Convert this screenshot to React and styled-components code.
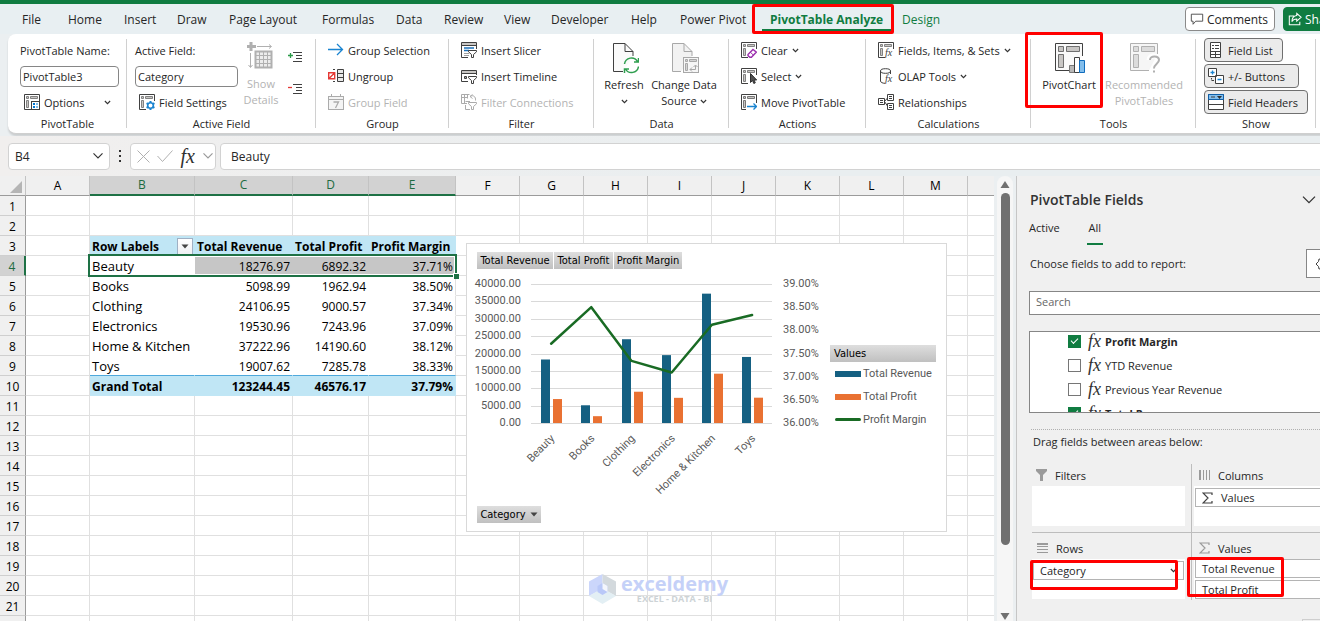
import React from "react";
import styled, { createGlobalStyle, css } from "styled-components";

const GREEN = "#107c41";
const RED = "#ff0000";
const INK = "#262626";

const GlobalStyle = createGlobalStyle`
  *, *::before, *::after { box-sizing: border-box; }
  body { margin: 0; overflow: hidden; }
  body, button, input { font-family: "Open Sans", "Noto Sans", sans-serif; font-size: 11px; color: ${INK}; }
  button { margin: 0; padding: 0; border: 0; background: none; text-align: left; }
  svg { display: block; flex: none; }
`;

/* ---------- frame ---------- */
const Viewport = styled.div`height: 100vh; overflow: hidden; background: #ebeff1;`;
const Frame = styled.div`
  width: calc(100% + 60px); height: 100%;
  display: flex; flex-direction: column;
  border-top: 4px solid ${GREEN};
`;
const Highlight = styled.span`
  position: absolute; z-index: 3; pointer-events: none;
  border: 3px solid ${RED}; border-radius: 2px;
  inset: ${(p) => p.$inset};
`;

/* ---------- tabs ---------- */
const TabBar = styled.nav`
  flex: none; display: flex; align-items: center; height: 30px;
  padding: 0 12px 0 14px; background: #e8eff2;
`;
const Tab = styled.button`
  position: relative; flex: none; height: 30px; width: ${(p) => p.$w}px;
  padding: 2px 0 0 8px; font-size: 12px; line-height: 28px; white-space: nowrap;
  color: ${(p) => (p.$green ? GREEN : INK)};
  font-weight: ${(p) => (p.$active ? 700 : 400)};
  ${(p) => p.$active && css`
    &::after { content: ""; position: absolute; left: 0; right: 2px; bottom: 3px; height: 2px; background: ${GREEN}; }
  `}
`;
const Spacer = styled.div`flex: 1;`;
const TopButton = styled.button`
  flex: none; display: flex; align-items: center; gap: 3px; height: 24px;
  margin-left: 8px; padding: 0 4px; border-radius: 4px; font-size: 12px;
  width: ${(p) => p.$w}px;
  border: 1px solid ${(p) => (p.$primary ? GREEN : "#8a8a8a")};
  background: ${(p) => (p.$primary ? GREEN : "#fff")};
  color: ${(p) => (p.$primary ? "#fff" : INK)};
`;

/* ---------- ribbon ---------- */
const Ribbon = styled.section`
  flex: none; display: flex; height: 100px; margin: 0 0 2px 8px; padding-top: 3px;
  background: #fff; border-radius: 8px 0 0 8px;
  border-bottom: 1px solid #cfcfcf;
  box-shadow: 0 2px 2px rgba(0, 0, 0, 0.14);
`;
const GroupBox = styled.div`
  position: relative; flex: none; width: ${(p) => p.$w}px;
  display: flex; flex-direction: column;
  &::after { content: ""; position: absolute; right: 0; top: 2px; height: 89px; width: 1px; background: #d0d0d0; }
`;
const GroupBody = styled.div`flex: none; height: 78px; display: flex; padding-left: ${(p) => p.$pad}px;`;
const GroupLabel = styled.div`height: 18px; line-height: 18px; text-align: center;`;
const Rows = styled.div`flex: none; width: ${(p) => (p.$w ? p.$w + "px" : "auto")}; display: grid; grid-template-rows: repeat(3, 26px); align-items: center;`;
const Command = styled.button`
  display: flex; align-items: center; gap: 4px; height: 24px; white-space: nowrap;
  padding: 0 ${(p) => (p.$indent ? 8 : 0)}px 0 ${(p) => (p.$indent ? 4 : 0)}px;
  color: ${(p) => (p.disabled ? "#b3b3b3" : INK)};
`;
const Toggle = styled(Command)`
  justify-self: start; width: ${(p) => p.$w}px; padding: 0 0 0 3px;
  border: 1px solid #707070; border-radius: 4px; background: #ebebeb;
`;
const FieldLabel = styled.label`white-space: nowrap;`;
const RibbonInput = styled.input`
  width: ${(p) => p.$w}px; height: 21px; padding: 0 2px; border: 1px solid #868686; border-radius: 4px; background: #fff;
`;
const Big = styled.button`
  position: relative; flex: none; width: ${(p) => p.$w}px; height: 76px; padding-top: 5px;
  display: flex; flex-direction: column; align-items: center; text-align: center; line-height: 16px;
  color: ${(p) => (p.disabled ? "#b3b3b3" : INK)};
  white-space: nowrap;
  & > svg:first-child { margin-bottom: 3px; }
`;
const Inline = styled.span`display: flex; align-items: center; gap: 3px; height: 16px;`;
const IconStack = styled.div`display: grid; gap: 6px; align-content: start; padding-top: 7px; margin-left: 4px;`;
const IconButton = styled.button`display: grid; place-items: center; height: 26px;`;

/* ---------- formula bar ---------- */
const FormulaBar = styled.section`
  flex: none; display: flex; align-items: center; height: 40px; padding: 0 0 0 8px;
  background: linear-gradient(90deg, #f1efee, #e9eef0 60%);
`;
const FormulaBox = styled.div`
  flex: ${(p) => (p.$w ? "none" : 1)}; width: ${(p) => p.$w}px; height: 27px; margin-left: ${(p) => p.$ml || 0}px;
  display: flex; align-items: center; justify-content: space-between; padding: 0 ${(p) => (p.$tight ? 1 : 5)}px 0 6px;
  border: 1px solid #d2d2d2; border-radius: 4px; background: #fff;
`;
const PlainInput = styled.input`min-width: 0; flex: 1; border: 0; padding: 0; background: none; font-size: 12px; outline: 0; padding-left: ${(p) => p.$pl || 0}px;`;
const Fx = styled.span`font: italic 400 ${(p) => p.$size}px/1 "Liberation Serif", serif; color: #303030;`;

/* ---------- sheet ---------- */
const Workspace = styled.div`flex: 1; min-height: 0; display: flex;`;
const Sheet = styled.main`position: relative; flex: 1; min-width: 0; overflow: hidden; background: #fff;`;
const Grid = styled.table`
  table-layout: fixed; width: 1032px; border-collapse: separate; border-spacing: 0;
  font-size: 13px; color: #000;
`;
const ColHead = styled.th`
  height: 20px; padding: 0; font-weight: 400; font-size: 12px; line-height: 18px;
  background: ${(p) => (p.$on ? "#d2d2d2" : "#f0f0f0")};
  color: ${(p) => (p.$on ? "#1e6b41" : "#000")};
  border-right: 1px solid #c3c3c3;
  border-bottom: ${(p) => (p.$on ? "2px solid #1e7145" : "1px solid #9b9b9b")};
`;
const RowHead = styled.th`
  height: 20px; padding: 2px 0 0; font-weight: 400; font-size: 12px; line-height: 17px;
  background: ${(p) => (p.$on ? "#d2d2d2" : "#f0f0f0")};
  color: ${(p) => (p.$on ? "#1e6b41" : "#000")};
  border-right: ${(p) => (p.$on ? "2px solid #1e7145" : "1px solid #9b9b9b")};
  border-bottom: 1px solid #cfcfcf;
`;
const Cell = styled.td`
  position: relative; height: 20px; padding: 2px 2px 0; line-height: 17px; white-space: nowrap;
  border-right: 1px solid #e0e0e0; border-bottom: 1px solid #e0e0e0;
  ${(p) => p.$pivot && css`border-color: transparent;`}
  ${(p) => p.$edge && css`border-right-color: #e0e0e0;`}
  ${(p) => p.$num && css`text-align: right; font-size: 12px; padding-right: 2px;`}
  ${(p) => p.$bold && css`font-weight: 700; font-size: 12px; background: #c0e6f5; border-color: #c0e6f5;`}
  ${(p) => p.$grey && css`background: #c6c6c6; border-color: #c6c6c6;`}
  ${(p) => p.$rule && css`border-bottom-color: #4fa9dc;`}
`;
const HeadCell = styled.div`display: flex; align-items: center; justify-content: space-between; height: 17px; margin-right: -1px;`;
const FilterButton = styled.button`
  display: grid; place-items: center; width: 16px; height: 17px;
  border: 1px solid #9fb0c4; background: linear-gradient(#fff, #eef0f3);
`;
const Selection = styled.div`
  position: absolute; z-index: 1; left: -2px; top: -2px; width: 369px; height: 23px;
  border: 2px solid #1e7145; box-shadow: inset 0 0 0 1px #fff;
  &::after { content: ""; position: absolute; right: -4px; bottom: -4px; width: 6px; height: 6px; background: #1e7145; border: solid #fff; border-width: 1px 0 0 1px; }
`;

/* ---------- chart ---------- */
const ChartPanel = styled.figure`
  position: absolute; z-index: 2; left: 466px; top: 67px; width: 481px; height: 289px; margin: 0;
  padding: 8px 10px; border: 1px solid #d9d9d9; background: #fff;
  display: flex; flex-direction: column; align-items: flex-start;
`;
const ChartButtons = styled.div`display: flex; gap: 1px;`;
const ChartButton = styled.button`
  display: flex; align-items: center; justify-content: center; gap: 4px; height: 17px; width: ${(p) => p.$w}px;
  background: linear-gradient(#dedede, #c0c0c0); color: #000; white-space: nowrap; line-height: 15px;
  font-family: "DejaVu Sans Condensed", "DejaVu Sans", sans-serif;
`;
const ChartBody = styled.div`flex: 1; display: flex; margin-left: -10px;`;
const Legend = styled.ul`
  list-style: none; margin: 76px 0 0 5px; padding: 0; width: 106px; color: #595959; font-family: Roboto, sans-serif;
`;
const LegendTitle = styled.li`
  height: 17px; line-height: 17px; padding-left: 4px; color: #000; background: linear-gradient(#dedede, #c0c0c0);
  font-family: "DejaVu Sans Condensed", "DejaVu Sans", sans-serif;
`;
const LegendItem = styled.li`display: flex; align-items: center; gap: 2px; height: 23px; padding-left: 5px; white-space: nowrap;`;
const Swatch = styled.span`flex: none; width: 26px; height: ${(p) => p.$h}px; background: ${(p) => p.$c}; border-radius: ${(p) => (p.$h < 6 ? 2 : 0)}px;`;

/* ---------- watermark ---------- */
const Watermark = styled.div`position: absolute; left: 588px; top: 397px; display: flex; align-items: center; gap: 4px;`;
const Brand = styled.div`font-size: 20px; font-weight: 700; line-height: 20px; color: #c5d1f8;`;
const Tagline = styled.div`font-size: 9px; font-weight: 700; line-height: 10px; color: #cdd3d6; text-align: center;`;

/* ---------- scroll bar ---------- */
const ScrollBar = styled.div`
  flex: none; width: 16px; margin: 0 3px; padding: 5px 0 0; border-radius: 8px 8px 0 0; background: #f6f6f6;
  display: flex; flex-direction: column; align-items: center;
`;
const Thumb = styled.div`flex: none; width: 9px; height: 80%; margin-top: 4px; border-radius: 5px; background: #707070;`;

/* ---------- pane ---------- */
const Pane = styled.aside`
  flex: none; width: 364px; border-left: 1px solid #c6c6c6; background: #f0f0f0; overflow: hidden;
  display: flex; flex-direction: column;
  & > * { flex: none; }
`;
const PaneTop = styled.div`padding-left: 12px;`;
const PaneTitleRow = styled.div`display: flex; align-items: center; height: 32px; margin-top: 8px; padding-right: 24px; gap: 27px;`;
const PaneTitle = styled.h2`flex: 1; margin: 0; padding-left: 1px; font-size: 14px; font-weight: 600; line-height: 20px; color: #333;`;
const PaneTabs = styled.div`display: flex; gap: 27px; height: 29px;`;
const PaneTab = styled.button`
  height: 29px; padding: 0 ${(p) => (p.$on ? 2 : 0)}px 5px; border-bottom: 2px solid ${(p) => (p.$on ? GREEN : "transparent")};
`;
const ChooseRow = styled.div`display: flex; align-items: center; justify-content: space-between; height: 29px; margin-top: 4px; padding: 0 26px 0 1px;`;
const GearButton = styled.button`display: flex; align-items: center; gap: 4px; width: 48px; height: 29px; padding-left: 8px; border: 1px solid #868686; background: #fff;`;
const SearchBox = styled.input`
  display: block; width: 320px; height: 24px; margin-top: 13px; padding: 0 6px 4px; border: 1px solid #868686; background: #fff;
  &::placeholder { color: #666; opacity: 1; }
`;
const FieldList = styled.ul`
  list-style: none; width: 320px; height: 82px; margin: 16px 0 0; padding: 0; overflow: hidden; border: 1px solid #868686; background: #fff;
`;
const FieldRow = styled.li`height: 24px; margin-top: ${(p) => (p.$first ? -3 : 0)}px;`;
const FieldName = styled.label`display: flex; align-items: center; height: 24px; padding-left: 38px; font-weight: ${(p) => (p.$bold ? 700 : 400)};`;
const FieldFx = styled(Fx)`width: 17px; margin-left: 7px;`;
const Check = styled.input`
  appearance: none; flex: none; position: relative; width: 13px; height: 13px; margin: 0;
  border: 1px solid #767676; background: #fff;
  &:checked { background: ${GREEN}; border-color: ${GREEN}; }
  &:checked::after {
    content: ""; position: absolute; left: 2px; top: 2px; width: 7px; height: 4px;
    border: solid #fff; border-width: 0 0 1px 1px; transform: rotate(-45deg);
  }
`;
const DragTitle = styled.div`margin: 16px 24px 0 14px; padding: 4px 0 0 2px; height: 35px; line-height: 16px; border-top: 1px dotted #b0b0b0;`;
const Zones = styled.div`display: grid; grid-template-columns: 160px 1fr; margin: 0 24px 0 15px;`;
const Zone = styled.section`
  height: ${(p) => (p.$bottom ? 67 : 69)}px;
  padding: ${(p) => (p.$bottom ? 4 : 0)}px ${(p) => (p.$right ? 0 : 6)}px 0 ${(p) => (p.$right ? 2 : 0)}px;
  ${(p) => !p.$bottom && css`border-bottom: 1px solid #bdbdbd;`}
  ${(p) => !p.$right && css`border-right: 1px solid #bdbdbd;`}
`;
const ZoneTitle = styled.h3`display: flex; align-items: center; gap: 8px; height: 22px; margin: 0; padding-left: ${(p) => p.$pl}px; font-size: 11px; font-weight: 400;`;
const ZoneBox = styled.div`position: relative; height: 40px; padding: ${(p) => p.$pt || 0}px 1px 0; background: #fff; display: grid; gap: 2px; align-content: start;`;
const ZoneItem = styled.button`
  display: flex; align-items: center; gap: 8px; height: 19px; padding: 0 6px; border: 1px solid #b4b4b4; background: #fff;
`;
const PaneFooter = styled.footer`display: flex; justify-content: flex-end; margin-top: 19px; padding-right: 18px;`;
const UpdateButton = styled.button`width: 60px; height: 24px; border: 1px solid #cfcfcf; text-align: center; color: #a0a0a0;`;

/* ---------- icons ---------- */
const Chevron = ({ s = 7, c = "#333", w = 1 }) => (
  <svg width={s} height={s} viewBox="0 0 8 8" fill="none" stroke={c} strokeWidth={w * 1.3}><path d="M1 2.3 4 5.3 7 2.3" /></svg>
);
const Svg16 = ({ children, c = "#404040", s = 16 }) => (
  <svg width={s} height={s} viewBox="0 0 16 16" fill="none" stroke={c} strokeWidth="1">{children}</svg>
);
const PivotBase = () => (
  <>
    <path d="M15.5 7V.5H.5v15H7" />
    <path d="M2.5 2.5h2v2h-2zM6.5 2.5h7v2h-7zM2.5 6.5h2v7h-2z" fill="#c8c6c4" strokeWidth=".9" stroke="#777" />
  </>
);
const OptionsIcon = () => (
  <Svg16><PivotBase /><rect x="7.5" y="7.5" width="8" height="8" fill="#fff" /><path d="M9 10h2M9 13h2" stroke="#0078d4" strokeWidth="2" /><path d="M12 10h2M12 13h2" stroke="#0078d4" /></Svg16>
);
const SettingsIcon = () => (
  <Svg16><PivotBase /><circle cx="11.5" cy="11.5" r="5" fill="#fff" stroke="none" /><g stroke="#1a84d0"><circle cx="11.5" cy="11.5" r="2.8" strokeWidth="1.6" /><path strokeWidth="2" d="M11.5 7v1.4M11.5 14.6V16M7.6 9.2l1.2.8M14.2 13l1.2.8M15.4 9.2l-1.2.8M8.8 13l-1.2.8" /></g></Svg16>
);
const ClearIcon = () => (
  <Svg16><PivotBase /><path d="m7 12.5 5-5 3.4 2.6-5 5.2H8.8L7 13.6z" fill="#fff" stroke="#9b2fae" strokeWidth="1.4" /><path d="m9.3 10.2 3.2 3" stroke="#9b2fae" /></Svg16>
);
const SelectIcon = () => (
  <Svg16><PivotBase /><path d="M9.5 5.5v9l2-2 1.3 3 1.5-.7-1.3-2.8h2.7z" fill="#505050" stroke="#303030" /></Svg16>
);
const MoveIcon = () => (
  <Svg16><path d="M15.5 9V.5H.5v15H5" /><path d="M2.5 2.5h2v2h-2zM6.5 2.5h7v2h-7zM2.5 6.5h2v7h-2z" fill="#c8c6c4" stroke="#777" /><path d="M6 12.5h9.5M12.5 9.5l3 3-3 3" stroke="#1a84d0" strokeWidth="1.3" /></Svg16>
);
const FieldsIcon = () => (
  <Svg16><PivotBase /><text x="7" y="14" fontSize="10" fontStyle="italic" fontFamily="Liberation Serif, serif" fill="#404040" stroke="none">fx</text></Svg16>
);
const OlapIcon = () => (
  <Svg16><ellipse cx="7.5" cy="3" rx="5" ry="2.3" /><path d="M2.5 3v10c0 1.3 2 2.3 4.5 2.3M12.5 3v3" /><text x="7" y="14" fontSize="10" fontStyle="italic" fontFamily="Liberation Serif, serif" fill="#404040" stroke="none">fx</text></Svg16>
);
const RelationsIcon = () => (
  <Svg16><path d="M.5 4.5h6v6h-6zM9.5.5h6v6h-6zM9.5 9.5h6v6h-6z" fill="#fff" /><path d="M2 6.5h3M2 8.5h3M11 2.5h3M11 4.5h3M11 11.5h3M11 13.5h3M6.5 7.5 9.5 4M6.5 7.5l3 4.5" /></Svg16>
);
const ArrowIcon = () => <Svg16 c="#1a84d0"><path d="M0 7.5h14.5M9 2l5.5 5.5L9 13" strokeWidth="1.3" /></Svg16>;
const UngroupIcon = () => (
  <Svg16><path d="M9.5 1.5h6v12h-6zM9.5 5.5h6M9.5 9.5h6" fill="#e9e9e9" /><path d="M5 1.5h3M5 13.5h3" strokeDasharray="2 1" /><path d="M.7 4.7h6v6h-6zM1 10.5 6.5 5" stroke="#e53935" strokeWidth="1.4" /></Svg16>
);
const CalendarIcon = () => (
  <Svg16 c="#ababab"><rect x=".5" y="2.5" width="15" height="13" fill="#f4f4f4" /><path d="M.5 5.5h15M3.5 0v2.5M12.5 0v2.5" /><path d="M5.5 8h5l-3 6" strokeWidth="1.3" /></Svg16>
);
const Funnel = ({ c = "#404040" }) => <path d="M7.5 8.5h8v1.3l-3 2.7v3h-2v-3l-3-2.7z" fill="#fff" stroke={c} />;
const SlicerIcon = () => (
  <Svg16><path d="M7 15.5H.5V.5h15V7M.5 3.5h15" /><path d="M1 1h14v2H1z" fill="#c8c6c4" stroke="none" /><path d="M3 6h10M3 8.5h5" stroke="#1a6fb8" strokeWidth="1.6" /><path d="M3 11.5h5M3 13.5h5" stroke="#a0a0a0" /><Funnel /></Svg16>
);
const TimelineIcon = () => (
  <Svg16><path d="M7 13.5H.5v-11h15V7M.5 5.5h15" /><path d="M1 3h14v2H1z" fill="#c8c6c4" stroke="none" /><path d="M3.5 8.5h2v2h-2z" fill="#aaa" /><Funnel /></Svg16>
);
const ConnectionsIcon = () => (
  <Svg16 c="#ababab"><path d="M6 9.5H.5v-9h8M.5 3.5H7M3.5.5v9M6.5.5v4M9 2.5c3-2 6 0 5.5 4M9 2.5l2.5-2M9 2.5l2.5 2" /><path d="M4.5 11v4.5H9M4.5 7.5H9" /><Funnel c="#ababab" /></Svg16>
);
const ShowDetailsIcon = () => (
  <svg width="28" height="31" viewBox="1 0 28 31" fill="none" stroke="#b0b0b0"><path d="M5 0v9M1 4.5h9" strokeWidth="3" /><path d="M11 4.5h14M23 2.5l2.5 2-2.5 2M4.5 11v14M2.5 23l2 2.5 2-2.5" /><rect x="9.5" y="9.5" width="16" height="16" fill="#ececec" strokeWidth="2" /><path d="M9.5 13.5h16M9.5 17.5h16M9.5 21.5h16M13.5 9.5v16M17.5 9.5v16M21.5 9.5v16" /></svg>
);
const ExpandIcon = ({ minus }) => (
  <svg width="16" height="14" viewBox="0 0 16 14" fill="none" stroke="#404040"><path d="M6 2.5h9M9 5.5h6M9 8.5h6M6 11.5h9" /><path d={minus ? "M1 5.5h4" : "M1 5.5h5M3.5 3v5"} stroke={minus ? "#e53935" : "#2a9a48"} strokeWidth="1.3" /></svg>
);
const RefreshIcon = () => (
  <svg width="30" height="32" viewBox="-1 0 30 32" fill="none" stroke="#404040"><path d="M13 29.5H3.5v-28H15l8 8V14" fill="#fafafa" /><path d="M15 1.5v8h8" /><g stroke="#2f9e4f" strokeWidth="1.5"><path d="M14.5 22a7 7 0 0 1 13-2.5M28.5 24.5a7 7 0 0 1-13 2.5M28.5 16v4H24M14.5 31v-4H19" /></g></svg>
);
const ChangeIcon = () => (
  <svg width="30" height="32" viewBox="-1 0 30 32" fill="none" stroke="#a8a8a8"><path d="M11 29.5H2.5v-28H14l8 8V14" fill="#f2f2f2" /><path d="M14 1.5v8h8" /><rect x="13.5" y="15.5" width="15" height="15" fill="#f6f6f6" /><path d="M15.5 17.5h2v2h-2zM19.5 17.5h7v2h-7zM15.5 21.5h2v7h-2z" fill="#d4d4d4" /><path d="M20 27.5h5.5v-4M22 25.5l-2 2 2 2M23.5 25l2-2 2 2" /></svg>
);
const PivotChartIcon = () => (
  <svg width="32" height="32" viewBox="0 0 32 32" fill="none" stroke="#404040"><path d="M29.5 14V1.5h-27v27H16" fill="#fafafa" /><path d="M5.5 4.5h5v5h-5zM13.5 4.5h13v5h-13zM5.5 12.5h5v13h-5z" fill="#c8c6c4" stroke="#6f6f6f" /><path d="M16.5 23.5h5v7h-5z" fill="#b8b8b8" stroke="#777" /><path d="M21.5 15.5h5v15h-5z" fill="#fff" /><path d="M26.5 18.5h5v12h-5z" fill="#83beec" stroke="#0f6cbd" /></svg>
);
const RecommendedIcon = () => (
  <svg width="32" height="32" viewBox="0 0 32 32" fill="none" stroke="#b0b0b0"><path d="M29.5 12V1.5h-27v27H21" fill="#f6f6f6" /><path d="M5.5 4.5h5v5h-5zM13.5 4.5h13v5h-13zM5.5 12.5h5v13h-5z" fill="#dcdcdc" /><path d="M21 18c0-6 10-5.5 10 0 0 4-5 4-5 8.5M26 28v2.5" stroke="#fff" strokeWidth="5" /><path d="M22 18c0-5 9-4.5 9 0 0 3.5-5 4-5 8.5M26 28.5v2" strokeWidth="2" /></svg>
);
const FieldListIcon = () => (
  <Svg16><path d="M2.5.5h10v15h-10zM2.5 9.5h10M2.5 12.5h10M7.5 9.5v6" fill="#fff" /><path d="M4 3.5h2M7 3.5h4M4 6.5h2M7 6.5h4" /></Svg16>
);
const PlusMinusIcon = () => (
  <Svg16><path d="M.5.5h8v8h-8zM7.5 7.5h8v8h-8z" fill="#fff" /><path d="M3.5 11.5V10M3.5 12.5H6" /><path d="M2.5 4.5h4M4.5 2.5v4M9.5 11.5h4" stroke="#1a84d0" strokeWidth="1.3" /></Svg16>
);
const HeadersIcon = () => (
  <Svg16><path d="M.5.5h15v15H.5z" fill="#fff" /><path d="M.5.5h15v5H.5z" fill="#83beec" stroke="#0f5fa8" /><path d="M.5 10.5h15M3 3h4" /><path d="M9 2h5l-2.5 3z" fill="#303030" stroke="none" /></Svg16>
);
const CommentIcon = () => <Svg16 s={14}><path d="M1.5 2.5h13v8h-8l-3 3.5v-3.5h-2z" /></Svg16>;
const ShareIcon = () => <Svg16 c="#fff" s={14}><path d="M7 4.5H1.5v10h12V11M10 1.5l5 4.5-5 4.5V8C7 8 5.5 9 4.5 11 4.5 7 7 4.5 10 4z" strokeWidth="1.2" /></Svg16>;
const GearIcon = () => (
  <Svg16><path d="M8 1.5 9.5 3.5 12 3l.5 2.5L15 8l-2.5 2.5L12 13l-2.5-.5L8 14.5 6.5 12.5 4 13l-.5-2.5L1 8l2.5-2.5L4 3l2.5.5z" /><circle cx="8" cy="8" r="2" /></Svg16>
);
const ScrollArrow = ({ down }) => <svg width="10" height="8" viewBox="0 0 10 8" fill="#707070"><path d={down ? "M.5 0h9L5 7z" : "M.5 7h9L5 0z"} /></svg>;
const Caret = () => <svg width="8" height="5" viewBox="0 0 8 5" fill="#444"><path d="M.5.5h7L4 4.5z" /></svg>;
const Sigma = ({ c = "#404040" }) => <svg width="11" height="12" viewBox="0 0 11 12" fill="none" stroke={c} strokeWidth="1.2"><path d="M10 3V1H1l5 5-5 5h9V9" /></svg>;
const FilterGlyph = () => <svg width="11" height="12" viewBox="0 0 11 12" fill="#9a9a9a"><path d="M0 0h11v2L7 6v6H4V6L0 2z" /></svg>;
const BarsGlyph = ({ rows }) => (
  <svg width="11" height="10" viewBox="0 0 11 10" stroke="#9a9a9a">
    {rows ? <path d="M0 1h11" strokeWidth="2" /> : <path d="M1 0v10" strokeWidth="2" />}
    <path d={rows ? "M0 3.5h11M0 6.5h11M0 9.5h11" : "M4.5 0v10M7.5 0v10M10.5 0v10"} />
  </svg>
);

/* ---------- data ---------- */
const tabs = [
  ["File", 46], ["Home", 56], ["Insert", 53], ["Draw", 52], ["Page Layout", 93], ["Formulas", 74], ["Data", 48],
  ["Review", 60], ["View", 47], ["Developer", 80], ["Help", 49], ["Power Pivot", 90], ["PivotTable Analyze", 132], ["Design", 60],
];
const columns = [["A", 64], ["B", 105], ["C", 98], ["D", 76], ["E", 87], ...[..."FGHIJKLM"].map((l) => [l, 64]), ["", 64]];
const sheetRows = {
  3: ["Row Labels", "Total Revenue", "Total Profit", "Profit Margin"],
  4: ["Beauty", "18276.97", "6892.32", "37.71%"],
  5: ["Books", "5098.99", "1962.94", "38.50%"],
  6: ["Clothing", "24106.95", "9000.57", "37.34%"],
  7: ["Electronics", "19530.96", "7243.96", "37.09%"],
  8: ["Home & Kitchen", "37222.96", "14190.60", "38.12%"],
  9: ["Toys", "19007.62", "7285.78", "38.33%"],
  10: ["Grand Total", "123244.45", "46576.17", "37.79%"],
};
const series = [4, 5, 6, 7, 8, 9].map((r) => ({
  name: sheetRows[r][0], revenue: +sheetRows[r][1], profit: +sheetRows[r][2], margin: parseFloat(sheetRows[r][3]),
}));
const fields = [["Profit Margin", true], ["YTD Revenue", false], ["Previous Year Revenue", false], ["Total Revenue", true]];

/* ---------- parts ---------- */
function Group({ w, pad = 12, label, children }) {
  return <GroupBox $w={w}><GroupBody $pad={pad}>{children}</GroupBody><GroupLabel>{label}</GroupLabel></GroupBox>;
}

function SheetCell({ row, col }) {
  const data = sheetRows[row];
  if (!data || col < 1 || col > 4) return <Cell />;
  const text = data[col - 1];
  const bold = row === 3 || row === 10;
  return (
    <Cell $pivot $edge={col === 4} $bold={bold} $num={col > 1 && row !== 3} $grey={row === 4 && col > 1} $rule={row === 9}>
      {row === 3 && col === 1 ? (
        <HeadCell>{text}<FilterButton aria-label="Filter row labels"><Caret /></FilterButton></HeadCell>
      ) : text}
      {row === 4 && col === 1 && <Selection />}
    </Cell>
  );
}

function Plot() {
  const x0 = 64, step = 40.2, top = 14, bottom = 153, h = bottom - top;
  const yRev = (v) => bottom - (v / 40000) * h;
  const yPct = (v) => bottom - ((v - 36) / 3) * h;
  const cx = (i) => x0 + step * (i + 0.5);
  const ticks = [0, 1, 2, 3, 4, 5, 6, 7, 8];
  return (
    <svg width="358" height="236" viewBox="0 -1 358 236" fontSize="11" fontFamily="Roboto, sans-serif" fill="#595959" role="img" aria-label="Revenue, profit and margin by category">
      {ticks.map((t) => (
        <g key={t}>
          <path d={`M${x0} ${Math.round(yRev(t * 5000)) + 0.5}h241`} stroke="#d9d9d9" />
          <text x="54" y={yRev(t * 5000) + 3} textAnchor="end">{(t * 5000).toFixed(2)}</text>
        </g>
      ))}
      {[36, 36.5, 37, 37.5, 38, 38.5, 39].map((p) => (
        <text key={p} x="316" y={yPct(p) + 3}>{p.toFixed(2)}%</text>
      ))}
      {series.map((s, i) => (
        <g key={s.name}>
          <rect x={Math.round(cx(i) - 10)} width="9" y={yRev(s.revenue)} height={bottom - yRev(s.revenue)} fill="#156082" />
          <rect x={Math.round(cx(i) + 2)} width="9" y={yRev(s.profit)} height={bottom - yRev(s.profit)} fill="#e97132" />
          <text transform={`translate(${cx(i) + 4} 169) rotate(-45)`} textAnchor="end">{s.name}</text>
        </g>
      ))}
      <polyline points={series.map((s, i) => `${cx(i)},${yPct(s.margin)}`).join(" ")} fill="none" stroke="#196b24" strokeWidth="2.5" strokeLinecap="round" strokeLinejoin="round" />
    </svg>
  );
}

function Chart() {
  return (
    <ChartPanel>
      <ChartButtons>
        <ChartButton $w={76}>Total Revenue</ChartButton>
        <ChartButton $w={59}>Total Profit</ChartButton>
        <ChartButton $w={68}>Profit Margin</ChartButton>
      </ChartButtons>
      <ChartBody>
        <Plot />
        <Legend>
          <LegendTitle>Values</LegendTitle>
          <LegendItem><Swatch $c="#156082" $h={6} />Total Revenue</LegendItem>
          <LegendItem><Swatch $c="#e97132" $h={6} />Total Profit</LegendItem>
          <LegendItem><Swatch $c="#196b24" $h={3} />Profit Margin</LegendItem>
        </Legend>
      </ChartBody>
      <ChartButton $w={64}>Category <Caret /></ChartButton>
    </ChartPanel>
  );
}

export default function App() {
  return (
    <Viewport>
      <GlobalStyle />
      <Frame>
        <TabBar>
          {tabs.map(([name, w]) => {
            const active = name === "PivotTable Analyze";
            return (
              <Tab key={name} $w={w} $active={active} $green={active || name === "Design"}>
                {name}
                {active && <Highlight $inset="0 0 0 -10px" />}
              </Tab>
            );
          })}
          <Spacer />
          <TopButton $w={90}><CommentIcon />Comments</TopButton>
          <TopButton $w={85} $primary><ShareIcon />Share</TopButton>
        </TabBar>

        <Ribbon>
          <Group w={119} label="PivotTable">
            <Rows $w={99}>
              <FieldLabel htmlFor="pt-name">PivotTable Name:</FieldLabel>
              <RibbonInput id="pt-name" $w={99} defaultValue="PivotTable3" />
              <Command $indent><OptionsIcon />Options<Spacer /><Chevron /></Command>
            </Rows>
          </Group>
          <Group w={189} pad={8} label="Active Field">
            <Rows $w={104}>
              <FieldLabel htmlFor="active-field">Active Field:</FieldLabel>
              <RibbonInput id="active-field" $w={103} defaultValue="Category" />
              <Command $indent><SettingsIcon />Field Settings</Command>
            </Rows>
            <Big $w={44} disabled><ShowDetailsIcon /><span>Show</span><span>Details</span></Big>
            <IconStack>
              <IconButton aria-label="Expand field"><ExpandIcon /></IconButton>
              <IconButton aria-label="Collapse field"><ExpandIcon minus /></IconButton>
            </IconStack>
          </Group>
          <Group w={133} label="Group">
            <Rows>
              <Command><ArrowIcon />Group Selection</Command>
              <Command><UngroupIcon />Ungroup</Command>
              <Command disabled><CalendarIcon />Group Field</Command>
            </Rows>
          </Group>
          <Group w={145} label="Filter">
            <Rows>
              <Command><SlicerIcon />Insert Slicer</Command>
              <Command><TimelineIcon />Insert Timeline</Command>
              <Command disabled><ConnectionsIcon />Filter Connections</Command>
            </Rows>
          </Group>
          <Group w={135} pad={8} label="Data">
            <Big $w={44}><RefreshIcon /><span>Refresh</span><Inline><Chevron /></Inline></Big>
            <Big $w={76}><ChangeIcon /><span>Change Data</span><Inline>Source <Chevron /></Inline></Big>
          </Group>
          <Group w={137} label="Actions">
            <Rows>
              <Command><ClearIcon />Clear<Chevron /></Command>
              <Command><SelectIcon />Select<Chevron /></Command>
              <Command><MoveIcon />Move PivotTable</Command>
            </Rows>
          </Group>
          <Group w={165} label="Calculations">
            <Rows>
              <Command><FieldsIcon />Fields, Items, &amp; Sets<Chevron /></Command>
              <Command><OlapIcon />OLAP Tools<Chevron /></Command>
              <Command><RelationsIcon />Relationships</Command>
            </Rows>
          </Group>
          <Group w={165} pad={8} label="Tools">
            <Big $w={60}><PivotChartIcon /><span>PivotChart</span><Highlight $inset="-5px -4px 5px -14px" /></Big>
            <Big $w={90} disabled><RecommendedIcon /><span>Recommended</span><span>PivotTables</span></Big>
          </Group>
          <Group w={120} pad={8} label="Show">
            <Rows>
              <Toggle $w={79}><FieldListIcon />Field List</Toggle>
              <Toggle $w={95}><PlusMinusIcon />+/- Buttons</Toggle>
              <Toggle $w={104}><HeadersIcon />Field Headers</Toggle>
            </Rows>
          </Group>
        </Ribbon>

        <FormulaBar>
          <FormulaBox $w={102}>
            <PlainInput aria-label="Name box" defaultValue="B4" />
            <Chevron s={12} w={0.6} />
          </FormulaBox>
          <svg width="20" height="12" viewBox="0 0 20 12" fill="#333"><path d="M9 0h2v2H9zM9 5h2v2H9zM9 10h2v2H9z" /></svg>
          <FormulaBox $w={86} $tight>
            <svg width="13" height="13" viewBox="0 0 13 13" stroke="#b0b0b0"><path d="m.5.5 12 12M12.5.5l-12 12" /></svg>
            <svg width="16" height="12" viewBox="0 0 16 12" stroke="#b0b0b0" fill="none"><path d="m.5 6 5 5.5 10-11" /></svg>
            <Fx $size={20}>fx</Fx>
            <Chevron s={12} w={0.6} c="#999" />
          </FormulaBox>
          <FormulaBox $ml={4}><PlainInput $pl={4} aria-label="Formula" defaultValue="Beauty" /></FormulaBox>
        </FormulaBar>

        <Workspace>
          <Sheet>
            <Grid>
              <colgroup><col style={{ width: 26 }} />{columns.map(([n, w], i) => <col key={i} style={{ width: w }} />)}</colgroup>
              <thead>
                <tr>
                  <ColHead aria-label="Select all"><svg width="25" height="18" viewBox="0 0 25 18" fill="#b5b5b5"><path d="M22 4v12H10z" /></svg></ColHead>
                  {columns.map(([n], i) => <ColHead key={i} $on={i > 0 && i < 5}>{n}</ColHead>)}
                </tr>
              </thead>
              <tbody>
                {Array.from({ length: 22 }, (_, i) => i + 1).map((row) => (
                  <tr key={row}>
                    <RowHead $on={row === 4}>{row}</RowHead>
                    {columns.map((_, col) => <SheetCell key={col} row={row} col={col} />)}
                  </tr>
                ))}
              </tbody>
            </Grid>
            <Watermark>
              <svg width="29" height="32" viewBox="0 0 29 32"><path d="M14.5 1 1 8.5V23l13.5-7z" fill="#cbd6fb" /><path d="M14.5 1 28 8.5V23l-13.5-7z" fill="#d3d9dd" /><path d="M1 23l13.5-8L28 23l-13.5 8z" fill="#e3eff4" /><path d="m14.5 10 5 3v6l-5 3-5-3v-6z" fill="#b9c8f8" /><path d="m14.5 10 5 3v6l-5-3z" fill="#f4f6fc" /></svg>
              <div><Brand>exceldemy</Brand><Tagline>EXCEL - DATA - BI</Tagline></div>
            </Watermark>
            <Chart />
          </Sheet>
          <ScrollBar><ScrollArrow /><Thumb /><Spacer /><ScrollArrow down /></ScrollBar>
          <Pane>
            <PaneTop>
              <PaneTitleRow>
                <PaneTitle>PivotTable Fields</PaneTitle>
                <Chevron s={16} w={0.5} />
                <svg width="12" height="12" viewBox="0 0 12 12" stroke="#333"><path d="m1 1 10 10M11 1 1 11" /></svg>
              </PaneTitleRow>
              <PaneTabs><PaneTab>Active</PaneTab><PaneTab $on>All</PaneTab></PaneTabs>
              <ChooseRow>
                <span>Choose fields to add to report:</span>
                <GearButton aria-label="Tools"><GearIcon /><Chevron /></GearButton>
              </ChooseRow>
              <SearchBox aria-label="Search fields" placeholder="Search" />
              <FieldList>
                {fields.map(([name, on], i) => (
                  <FieldRow key={name} $first={i === 0}>
                    <FieldName $bold={on}><Check type="checkbox" defaultChecked={on} /><FieldFx $size={18}>fx</FieldFx>{name}</FieldName>
                  </FieldRow>
                ))}
              </FieldList>
            </PaneTop>
            <DragTitle>Drag fields between areas below:</DragTitle>
            <Zones>
              <Zone><ZoneTitle $pl={4}><FilterGlyph />Filters</ZoneTitle><ZoneBox /></Zone>
              <Zone $right><ZoneTitle $pl={5}><BarsGlyph />Columns</ZoneTitle><ZoneBox $pt={2}><ZoneItem><Sigma />Values</ZoneItem></ZoneBox></Zone>
              <Zone $bottom>
                <ZoneTitle $pl={5}><BarsGlyph rows />Rows</ZoneTitle>
                <ZoneBox $pt={2}><ZoneItem>Category<Spacer /><Chevron /></ZoneItem><Highlight $inset="1px 7px 9px -2px" /></ZoneBox>
              </Zone>
              <Zone $bottom $right>
                <ZoneTitle $pl={5}><Sigma c="#9a9a9a" />Values</ZoneTitle>
                <ZoneBox><ZoneItem>Total Revenue</ZoneItem><ZoneItem>Total Profit</ZoneItem><Highlight $inset="-2px 72px 2px -7px" /></ZoneBox>
              </Zone>
            </Zones>
            <PaneFooter><UpdateButton disabled>Update</UpdateButton></PaneFooter>
          </Pane>
        </Workspace>
      </Frame>
    </Viewport>
  );
}
